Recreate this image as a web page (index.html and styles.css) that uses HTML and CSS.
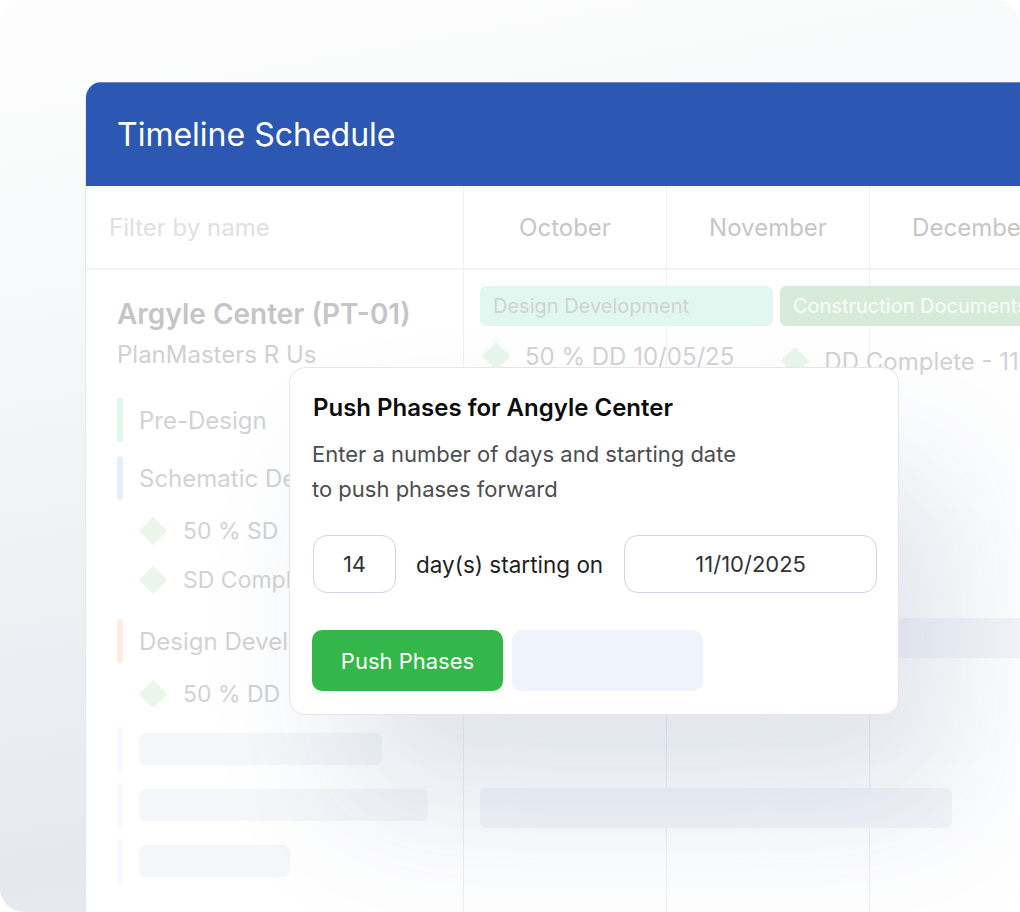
FILE: index.html
```html
<!DOCTYPE html>
<html lang="en">
<head>
    <meta charset="UTF-8">
    <meta name="viewport" content="width=device-width, initial-scale=1.0">
    <title>Timeline Schedule</title>
    <link rel="stylesheet" href="styles.css">
</head>
<body>
    <div class="frame">
        <div class="card">
            <div class="card-head">
                <h1>Timeline Schedule</h1>
            </div>
            <div class="board">
                <div class="side">
                    <div class="filter">Filter by name</div>
                    <div class="project">
                        <div class="project-name">Argyle Center (PT-01)</div>
                        <div class="project-owner">PlanMasters R Us</div>

                        <div class="phase phase-first">
                            <span class="phase-bar mint"></span>
                            <span class="phase-name">Pre-Design</span>
                        </div>
                        <div class="phase">
                            <span class="phase-bar sky"></span>
                            <span class="phase-name">Schematic Design</span>
                        </div>
                        <div class="milestone milestone-first">
                            <span class="diamond"></span>
                            <span class="milestone-name">50 % SD</span>
                        </div>
                        <div class="milestone">
                            <span class="diamond"></span>
                            <span class="milestone-name">SD Complete</span>
                        </div>
                        <div class="phase phase-gap">
                            <span class="phase-bar peach"></span>
                            <span class="phase-name">Design Development</span>
                        </div>
                        <div class="milestone milestone-first">
                            <span class="diamond"></span>
                            <span class="milestone-name">50 % DD</span>
                        </div>

                        <div class="skeleton skeleton-first">
                            <span class="phase-bar faint"></span>
                            <span class="skeleton-block" style="width: 243px"></span>
                        </div>
                        <div class="skeleton">
                            <span class="phase-bar faint"></span>
                            <span class="skeleton-block" style="width: 289px"></span>
                        </div>
                        <div class="skeleton">
                            <span class="phase-bar faint"></span>
                            <span class="skeleton-block" style="width: 151px"></span>
                        </div>
                    </div>
                </div>
                <div class="chart">
                    <div class="months">
                        <div class="month">October</div>
                        <div class="month">November</div>
                        <div class="month">December</div>
                    </div>
                    <div class="chart-body">
                        <div class="chip-row">
                            <div class="chip chip-dd">Design Development</div>
                            <div class="chip chip-cd">Construction Documents</div>
                        </div>
                        <div class="mark-row">
                            <div class="mark">
                                <span class="diamond"></span>
                                <span class="mark-name">50 % DD 10/05/25</span>
                            </div>
                            <div class="mark mark-late">
                                <span class="diamond"></span>
                                <span class="mark-name">DD Complete - 11</span>
                            </div>
                        </div>
                        <div class="gantt-bar bar-one"></div>
                        <div class="gantt-bar bar-two"></div>
                    </div>
                </div>
            </div>
        </div>

        <div class="dialog">
            <h2>Push Phases for Angyle Center</h2>
            <p class="dialog-text">Enter a number of days and starting date<br>to push phases forward</p>
            <div class="push-row">
                <div class="field field-days">14</div>
                <span class="push-label">day(s) starting on</span>
                <div class="field field-date">11/10/2025</div>
            </div>
            <div class="dialog-actions">
                <button class="btn-push">Push Phases</button>
                <button class="btn-cancel"></button>
            </div>
        </div>
    </div>
</body>
</html>
```

FILE: styles.css
```css
* {
    box-sizing: border-box;
}
body {
    margin: 0;
    font-family: 'Inter', 'Noto Sans', sans-serif;
    background: #ffffff;
}
.frame {
    position: relative;
    width: 1020px;
    height: 912px;
    overflow: hidden;
    border-radius: 24px;
    padding: 82px 0 0 85px;
    background: linear-gradient(170deg, #fdfdfd 0%, #f8f9fa 25%, #eef0f4 55%, #e5e9ef 80%, #eaedf1 100%);
}
.card {
    width: 1100px;
    height: 900px;
    background: #fff;
    border-top-left-radius: 16px;
    border-left: 1px solid #e4e8ef;
    overflow: hidden;
}
.card-head {
    height: 104px;
    background: #2c58b4;
    box-shadow: inset 0 1px 0 rgba(255, 255, 255, 0.3);
    display: flex;
    align-items: center;
    padding-left: 31px;
}
.card-head h1 {
    margin: 0;
    color: #fff;
    font-size: 32px;
    font-weight: 400;
}
.board {
    display: grid;
    grid-template-columns: 378px 1fr;
    height: 100%;
}
.side {
    border-right: 1px solid #f0f0f5;
}
.filter {
    height: 84px;
    border-bottom: 2px solid #f2f2f7;
    display: flex;
    align-items: center;
    padding-left: 23px;
    font-size: 24px;
    color: #e0e0e3;
}
.project {
    padding: 28px 0 0 31px;
}
.project-name {
    font-size: 28px;
    line-height: 32px;
    font-weight: 600;
    color: #c5c5c7;
}
.project-owner {
    margin-top: 10px;
    font-size: 24px;
    line-height: 30px;
    color: #d0d0d2;
}
.phase, .skeleton {
    display: flex;
    align-items: center;
    gap: 16px;
    height: 44px;
    margin-top: 14px;
}
.phase-first {
    margin-top: 28px;
}
.phase-gap {
    margin-top: 19px;
}
.phase-bar {
    width: 6px;
    height: 44px;
    border-radius: 3px;
    flex-shrink: 0;
}
.mint { background: #e1f7ee; }
.sky { background: #e3eef7; }
.peach { background: #fdece2; }
.faint { background: #f7f8fc; }
.phase-name {
    font-size: 24px;
    color: #d2d2d4;
    white-space: nowrap;
}
.milestone {
    display: flex;
    align-items: center;
    height: 40px;
    margin-top: 9px;
    padding-left: 26px;
    gap: 20px;
}
.milestone-first {
    margin-top: 11px;
}
.milestone-name {
    font-size: 23px;
    color: #d2d2d4;
    white-space: nowrap;
}
.diamond {
    width: 20px;
    height: 20px;
    background: #eaf6ea;
    transform: rotate(45deg);
    flex-shrink: 0;
}
.skeleton {
    margin-top: 12px;
}
.skeleton-first {
    margin-top: 13px;
}
.skeleton-block {
    height: 32px;
    border-radius: 7px;
    background: #f6f7fa;
}
.chart {
    overflow: hidden;
}
.months {
    display: flex;
    height: 84px;
    border-bottom: 2px solid #f2f2f7;
}
.month {
    width: 203px;
    flex-shrink: 0;
    border-right: 1px solid #f0f0f5;
    display: flex;
    align-items: center;
    justify-content: center;
    font-size: 24px;
    color: #c6c6c8;
}
.chart-body {
    height: 700px;
    background-image: linear-gradient(90deg, transparent 202px, #f0f0f5 202px, #f0f0f5 203px, transparent 203px);
    background-size: 203px 100%;
    padding-top: 16px;
}
.chip-row {
    display: flex;
    gap: 7px;
    padding-left: 16px;
}
.chip {
    height: 40px;
    border-radius: 6px;
    display: flex;
    align-items: center;
    padding-left: 13px;
    font-size: 20px;
    white-space: nowrap;
    flex-shrink: 0;
}
.chip-dd {
    width: 293px;
    background: #e3f7f1;
    color: #cdd5d2;
}
.chip-cd {
    width: 320px;
    background: #d6ecd8;
    color: #fbfdfb;
}
.mark-row {
    display: flex;
    padding-left: 22px;
    margin-top: 10px;
}
.mark {
    display: flex;
    align-items: center;
    gap: 19px;
    height: 40px;
}
.mark-late {
    margin-left: 51px;
    margin-top: 5px;
}
.mark-name {
    font-size: 24px;
    color: #d2d2d4;
    white-space: nowrap;
}
.gantt-bar {
    height: 40px;
    border-radius: 6px;
    background: #f5f6fa;
}
.bar-one {
    margin: 237px 0 0 434px;
    width: 300px;
}
.bar-two {
    margin: 130px 0 0 16px;
    width: 472px;
}
.dialog {
    position: absolute;
    left: 289px;
    top: 367px;
    width: 610px;
    height: 348px;
    background: #fff;
    border: 1px solid #e6e5ef;
    border-radius: 16px;
    padding: 25px 18px 22px 22px;
    box-shadow: 55px 95px 140px rgba(50, 80, 130, 0.15);
}
.dialog h2 {
    margin: 0 0 0 1px;
    font-size: 24px;
    line-height: 30px;
    font-weight: 600;
    color: #0d0d0d;
}
.dialog-text {
    margin: 14px 0 0;
    font-size: 22px;
    line-height: 35px;
    color: #4d4d4f;
}
.push-row {
    display: flex;
    align-items: center;
    margin-top: 28px;
}
.field {
    height: 58px;
    border: 1.5px solid #d4d1e5;
    border-radius: 14px;
    display: flex;
    align-items: center;
    justify-content: center;
    font-size: 22px;
    color: #333;
    flex-shrink: 0;
}
.field-days {
    width: 83px;
    margin-left: 1px;
}
.push-label {
    margin-left: 20px;
    font-size: 22.5px;
    color: #1f1f1f;
    white-space: nowrap;
}
.field-date {
    width: 253px;
    margin-left: 21px;
}
.dialog-actions {
    display: flex;
    gap: 9px;
    margin-top: 37px;
}
.dialog-actions button {
    width: 191px;
    height: 61px;
    border: none;
    border-radius: 10px;
    font-family: inherit;
    font-size: 22px;
}
.btn-push {
    background: #34b74a;
    color: #fff;
}
.btn-cancel {
    background: #eef3fc;
}
```
